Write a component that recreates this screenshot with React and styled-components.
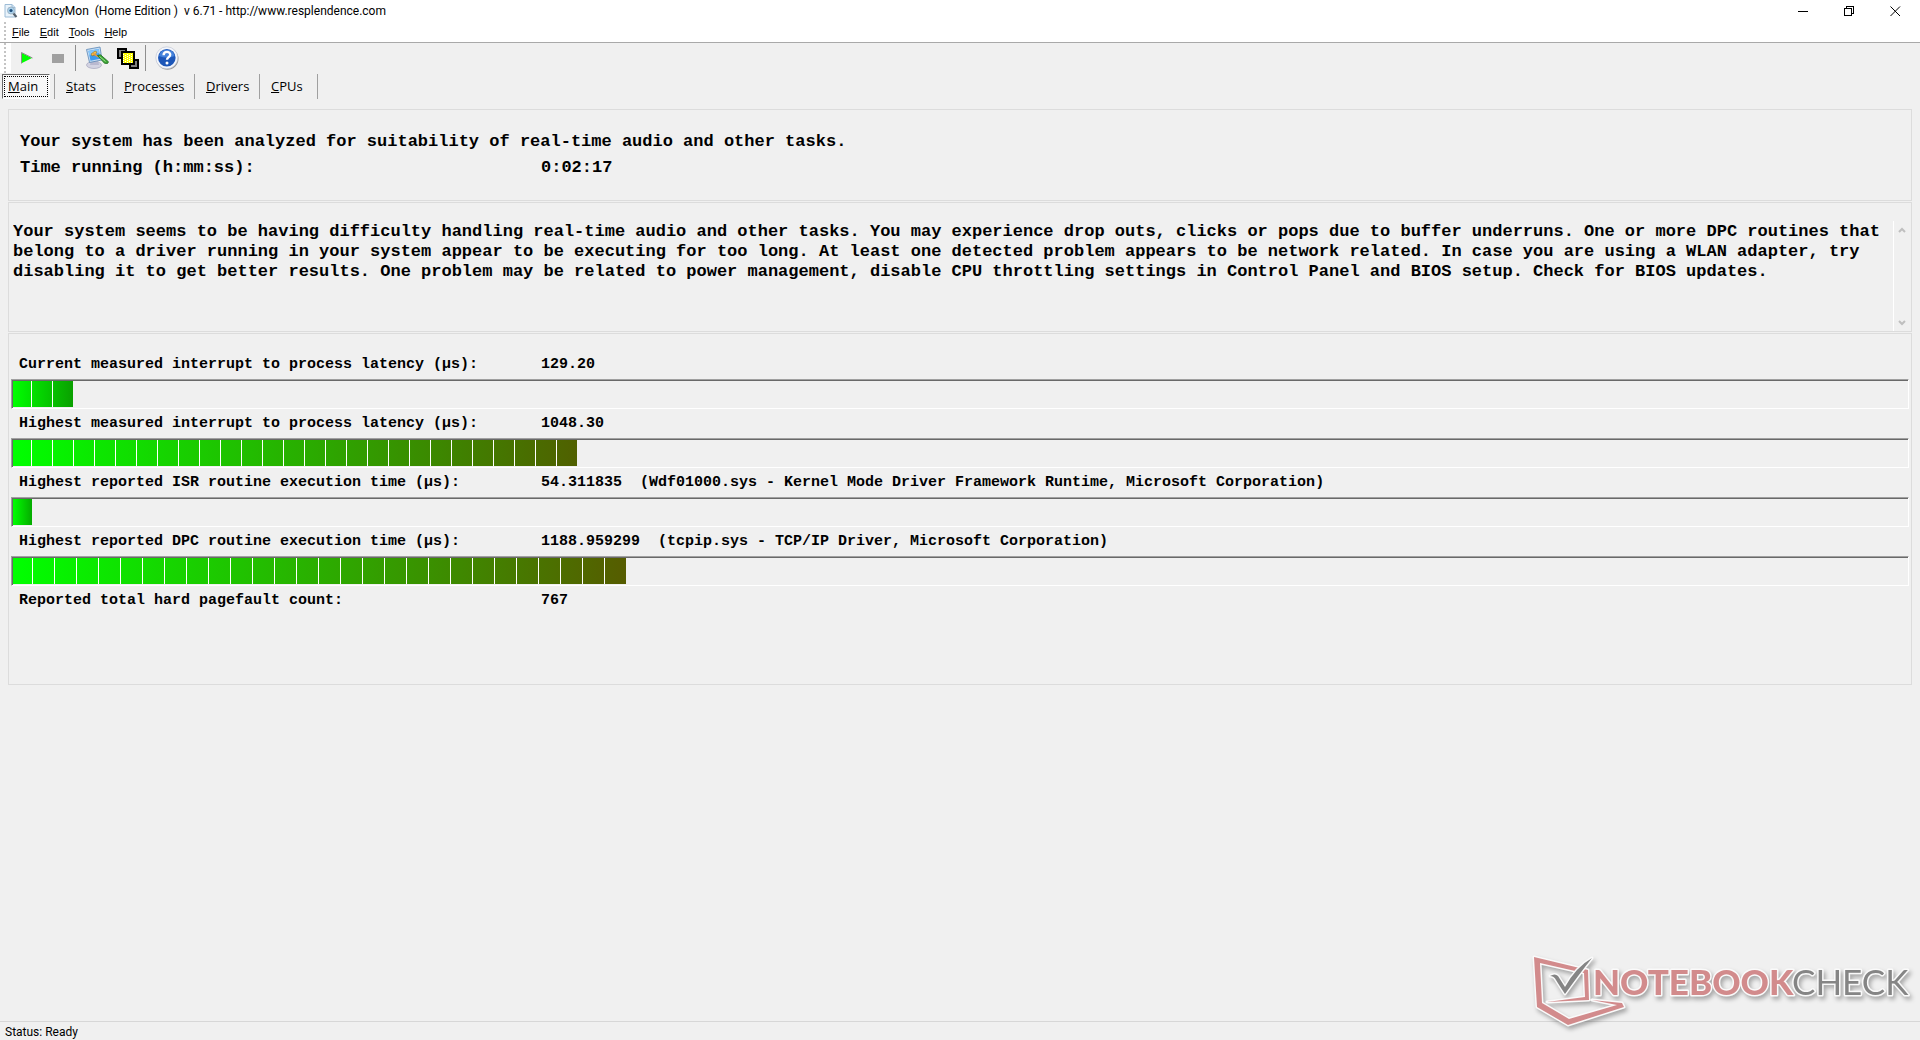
import React, { useState } from "react";
import styled, { createGlobalStyle, css } from "styled-components";

const UI_FONT = `Roboto, "Noto Sans", sans-serif`;
const TAB_FONT = `"Open Sans", "Noto Sans", sans-serif`;
const MENU_FONT = `"Liberation Sans", Arial, sans-serif`;
const MONO_FONT = `"Liberation Mono", "Courier New", monospace`;

const menus = ["File", "Edit", "Tools", "Help"];

const tabs = [
    { name: "Stats", width: 58 },
    { name: "Processes", width: 82 },
    { name: "Drivers", width: 65 },
    { name: "CPUs", width: 59 },
];

const report =
    "Your system seems to be having difficulty handling real-time audio and other tasks. You may experience drop outs, clicks or pops due to buffer underruns. One or more DPC routines that belong to a driver running in your system appear to be executing for too long. At least one detected problem appears to be network related. In case you are using a WLAN adapter, try disabling it to get better results. One problem may be related to power management, disable CPU throttling settings in Control Panel and BIOS setup. Check for BIOS updates.";

const measurements = [
    {
        label: "Current measured interrupt to process latency (µs):",
        value: "129.20",
        blocks: 3,
        pitch: 21,
        end: "#0aa000",
    },
    {
        label: "Highest measured interrupt to process latency (µs):",
        value: "1048.30",
        blocks: 27,
        pitch: 21,
        end: "#506000",
    },
    {
        label: "Highest reported ISR routine execution time (µs):",
        value: "54.311835",
        note: "(Wdf01000.sys - Kernel Mode Driver Framework Runtime, Microsoft Corporation)",
        blocks: 1,
        pitch: 22,
        end: "#05ab00",
    },
    {
        label: "Highest reported DPC routine execution time (µs):",
        value: "1188.959299",
        note: "(tcpip.sys - TCP/IP Driver, Microsoft Corporation)",
        blocks: 28,
        pitch: 22,
        end: "#565c00",
    },
];

function Hotkey({ children })
{
    return (
        <>
            <u>{children[0]}</u>
            {children.slice(1)}
        </>
    );
}

function AppIcon()
{
    return (
        <svg width="14" height="16" viewBox="0 0 14 16">
            <path d="M1 1.5h7l3 3v9.5H1z" fill="#e9f3fb" stroke="#9dbcd6" />
            <path d="M8 1.5v3h3" fill="#c7dff2" stroke="#9dbcd6" />
            <path d="M9 10l3.5 4" stroke="#54606b" strokeWidth="2" />
            <circle cx="7" cy="7.500" r="3.500" fill="#a9d2ee" stroke="#9fb4c4" />
            <circle cx="7" cy="7.500" r="1.600" fill="#1f4f7c" />
        </svg>
    );
}

function DisplayIcon()
{
    return (
        <svg width="24" height="24" viewBox="0 0 24 24">
            <ellipse cx="9" cy="19" rx="7.500" ry="3.500" fill="#d3d3e2" stroke="#9a9ab5" strokeWidth=".6" />
            <path d="M6 14h7l1 5H5z" fill="#b9b9d0" />
            <path d="M1.500 3.500L15 1l2 13-12.500 2.500z" fill="#c4dcf3" stroke="#5b86b5" strokeWidth=".8" />
            <path d="M3.500 5l10.200-1.900 1.500 9.700-9.700 1.900z" fill="#3c9af0" />
            <path d="M3.500 5l10.200-1.900.6 4L4.300 9.500z" fill="#84c6fa" />
            <path d="M6 8l4-3 2 1-2 3-3 1z" fill="#f2c14a" stroke="#7c5a1c" strokeWidth=".5" />
            <path d="M8 7.500l6 3.500" stroke="#e89a3c" strokeWidth="1.500" />
            <path d="M12.500 9.500l3-.7 8 7-1 1.700-3-.2z" fill="#3da635" stroke="#1d6b1d" strokeWidth=".8" />
            <path d="M14.500 10.500l6 5" stroke="#9be28c" strokeWidth="1" />
        </svg>
    );
}

function StackIcon()
{
    return (
        <svg width="24" height="24" viewBox="0 0 24 24" shapeRendering="crispEdges">
            <rect x="2" y="3" width="8" height="9" fill="#808080" stroke="#000" strokeWidth="2" />
            <rect x="14" y="14" width="8" height="8" fill="#808080" stroke="#000" strokeWidth="2" />
            <rect x="6" y="6" width="12" height="12" fill="#ffff00" stroke="#000" strokeWidth="2" />
            {[8, 10, 12, 14, 16].map((x) => (
                <path key={x} d={`M${x - 0.5} 8v9`} stroke="#fff" strokeDasharray="1 1" strokeDashoffset={(x / 2) % 2} />
            ))}
        </svg>
    );
}

function HelpIcon()
{
    return (
        <svg width="24" height="24" viewBox="0 0 24 24">
            <circle cx="12.500" cy="12.700" r="11" fill="#9a9a9a" />
            <circle cx="11.800" cy="11.800" r="11" fill="#f4f6fb" stroke="#b8bfd0" strokeWidth=".6" />
            <circle cx="11.800" cy="11.800" r="8.800" fill="#1c56b8" />
            <path d="M4 10a8 8 0 0 1 15.600 0q-7.800 3-15.600 0z" fill="#4583dc" />
            <path d="M8.600 9.200c0-4.400 6.800-4.200 6.600-.4-.1 2.300-3.200 2.500-3.200 5" fill="none" stroke="#fff" strokeWidth="2.400" />
            <circle cx="12" cy="17" r="1.500" fill="#fff" />
        </svg>
    );
}

function Watermark()
{
    return (
        <Brand viewBox="0 0 388 76" role="img" aria-label="Notebookcheck">
            <g stroke="#fafafa" strokeWidth="3" strokeLinejoin="round" paintOrder="stroke">
                <path
                    fill="#d28b8c"
                    d="M4 3L58 16 59 46 17 48 55 43 54 19 10 9 12 49 39 65 87 51 62 46 92 49 94 53 38 71 7 53z"
                />
                <path fill="#858585" d="M20 22q5-3 8 0l7 11Q46 13 62 4 50 19 35 40 29 31 26 26 24 22 20 22z" />
                <BrandText x="63" y="41" $weight="900" fill="#d28b8c">NOTEBOOK</BrandText>
                <BrandText x="262" y="41" $weight="400" fill="#858585">CHECK</BrandText>
            </g>
        </Brand>
    );
}

function Meter({ label, blocks, pitch, end })
{
    return (
        <MeterFrame role="meter" aria-label={label} aria-valuenow={blocks} aria-valuemin={0} aria-valuemax={90}>
            <MeterFill $pitch={pitch} $end={end} style={{ width: blocks * pitch - 3 }} />
        </MeterFrame>
    );
}

function App()
{
    const [tab, setTab] = useState("Main");

    return (
        <Window>
            <GlobalStyle />
            <TitleBar>
                <AppIcon />
                <Title>{"LatencyMon  (Home Edition )  v 6.71 - http://www.resplendence.com"}</Title>
                <WindowButton aria-label="Minimize">
                    <svg width="11" height="11" shapeRendering="crispEdges">
                        <path d="M0 5.500h10" stroke="#000" />
                    </svg>
                </WindowButton>
                <WindowButton aria-label="Restore">
                    <svg width="11" height="11" fill="none" stroke="#000" shapeRendering="crispEdges">
                        <path d="M.5 2.500h7v7h-7zM2.500 2.500v-2h7v7h-2" />
                    </svg>
                </WindowButton>
                <WindowButton aria-label="Close">
                    <svg width="11" height="11" stroke="#000">
                        <path d="M.5 .5l9.500 9.500M10 .5L.5 10" />
                    </svg>
                </WindowButton>
            </TitleBar>

            <MenuBar>
                <Grip />
                {menus.map((name) => (
                    <MenuItem key={name}><Hotkey>{name}</Hotkey></MenuItem>
                ))}
            </MenuBar>

            <ToolBar>
                <Grip />
                <ToolButton aria-label="Start">
                    <svg width="12" height="12">
                        <path d="M1 1v10l10-5z" fill="#00ff00" />
                        <path d="M.5 11.500V.5L11.500 6" fill="none" stroke="#8c8c8c" />
                    </svg>
                </ToolButton>
                <ToolButton aria-label="Stop">
                    <svg width="12" height="9">
                        <rect width="12" height="9" fill="#a0a0a0" />
                    </svg>
                </ToolButton>
                <ToolDivider />
                <ToolButton aria-label="Options"><DisplayIcon /></ToolButton>
                <ToolButton aria-label="Windows"><StackIcon /></ToolButton>
                <ToolDivider />
                <ToolButton aria-label="Help"><HelpIcon /></ToolButton>
            </ToolBar>

            <TabBar role="tablist">
                <MainTab role="tab" aria-selected={tab === "Main"} onClick={() => setTab("Main")}>
                    <Hotkey>Main</Hotkey>
                </MainTab>
                {tabs.map(({ name, width }) => (
                    <Tab key={name} role="tab" $width={width} aria-selected={tab === name} onClick={() => setTab(name)}>
                        <Hotkey>{name}</Hotkey>
                    </Tab>
                ))}
            </TabBar>

            <Content>
                <Summary>
                    <SummaryLine>Your system has been analyzed for suitability of real-time audio and other tasks.</SummaryLine>
                    <SummaryLine>
                        <SummaryLabel>Time running (h:mm:ss):</SummaryLabel>
                        <span>0:02:17</span>
                    </SummaryLine>
                </Summary>

                <Report>
                    <ReportText readOnly aria-label="Analysis report" value={report} />
                    <ScrollTrack>
                        <ScrollButton aria-label="Scroll up">
                            <svg width="8" height="6"><path d="M1 5l3-3 3 3" /></svg>
                        </ScrollButton>
                        <ScrollButton aria-label="Scroll down">
                            <svg width="8" height="6"><path d="M1 1l3 3 3-3" /></svg>
                        </ScrollButton>
                    </ScrollTrack>
                </Report>

                <Measurements>
                    {measurements.map((item) => (
                        <React.Fragment key={item.label}>
                            <Reading>
                                <ReadingLabel>{item.label}</ReadingLabel>
                                <span>{item.note ? `${item.value}  ${item.note}` : item.value}</span>
                            </Reading>
                            <Meter {...item} />
                        </React.Fragment>
                    ))}
                    <Reading>
                        <ReadingLabel>Reported total hard pagefault count:</ReadingLabel>
                        <span>767</span>
                    </Reading>
                </Measurements>
            </Content>

            <StatusBar>Status: Ready</StatusBar>
            <Watermark />
        </Window>
    );
}

const GlobalStyle = createGlobalStyle`
  * {
    box-sizing: border-box;
  }
  body {
    margin: 0;
    background: #f0f0f0;
    color: #000;
  }
  button {
    border: none;
    padding: 0;
    background: none;
    color: inherit;
    font: inherit;
  }
  svg {
    flex: none;
  }
`;

const Window = styled.div`
  position: relative;
  display: flex;
  flex-direction: column;
  min-height: 100vh;
  font-family: ${UI_FONT};
  font-size: 12px;
`;

const TitleBar = styled.header`
  display: flex;
  align-items: center;
  height: 22px;
  padding: 0 2px 0 4px;
  background: #fff;
`;

const Title = styled.h1`
  flex: 1;
  margin: 0 0 0 5px;
  font-size: 12px;
  font-weight: 400;
  line-height: 22px;
  white-space: pre;
`;

const WindowButton = styled.button`
  display: flex;
  align-items: center;
  justify-content: center;
  width: 46px;
  height: 20px;
`;

const Grip = styled.div`
  width: 2px;
  align-self: stretch;
  margin: 0 5px 0 4px;
  background: repeating-linear-gradient(to bottom, #c4c4c4 0, #c4c4c4 2px, transparent 2px, transparent 4px);
`;

const MenuBar = styled.nav`
  display: flex;
  align-items: center;
  height: 21px;
  border-bottom: 1px solid #a9a9a9;
  background: #fff;
  font-family: ${MENU_FONT};
`;

const MenuItem = styled.button`
  padding: 0 5px;
  font-size: 11px;
  line-height: 20px;

  &:first-of-type {
    padding-left: 1px;
  }
`;

const ToolBar = styled.div`
  display: flex;
  align-items: center;
  height: 30px;
  background: linear-gradient(to right, #fff 11px, transparent 11px);
`;

const ToolButton = styled.button`
  display: flex;
  align-items: center;
  justify-content: center;
  width: 31px;
  height: 30px;
`;

const ToolDivider = styled.span`
  width: 1px;
  height: 26px;
  margin: 0 5px 0 2px;
  background: #8e8e8e;
`;

const TabBar = styled.div`
  display: flex;
  align-items: center;
  height: 25px;
  margin-top: 1px;
  padding-left: 2px;
  font-family: ${TAB_FONT};
  font-size: 13px;
  line-height: 22px;
`;

const MainTab = styled.button`
  width: 48px;
  height: 25px;
  margin-right: 4px;
  padding: 0 0 1px 5px;
  border: 1px solid;
  border-color: #696969 #fff #fff #696969;
  background: #f8f8f8;
  text-align: left;
  outline: 1px dotted #000;
  outline-offset: -3px;
`;

const Tab = styled.button`
  width: ${({ $width }) => $width}px;
  height: 25px;
  padding: 0 0 2px 11px;
  border-left: 1px solid #a0a0a0;
  text-align: left;

  &:last-child {
    border-right: 1px solid #a0a0a0;
  }
`;

const Content = styled.main`
  display: flex;
  flex: 1;
  flex-direction: column;
  gap: 1px;
  padding: 10px 8px;
  font-family: ${MONO_FONT};
  font-weight: 700;
`;

const panel = css`
  border: 1px solid #dcdcdc;
`;

const Summary = styled.section`
  ${panel}
  padding: 19px 11px 19px;
  font-size: 17px;
`;

const SummaryLine = styled.p`
  display: flex;
  margin: 0;
  line-height: 26px;
`;

const SummaryLabel = styled.span`
  width: 521px;
`;

const Report = styled.section`
  ${panel}
  display: flex;
  padding: 18px 1px 0 4px;
`;

const ReportText = styled.textarea`
  flex: 1;
  height: 110px;
  padding: 1px 0 0;
  border: none;
  outline: none;
  overflow: hidden;
  resize: none;
  background: transparent;
  color: #000;
  font: inherit;
  font-size: 17px;
  line-height: 20px;
`;

const ScrollTrack = styled.div`
  display: flex;
  flex-direction: column;
  justify-content: space-between;
  width: 17px;
  border-left: 1px solid #fff;
`;

const ScrollButton = styled.button`
  display: flex;
  align-items: center;
  justify-content: center;
  height: 17px;

  path {
    fill: none;
    stroke: #bfbfbf;
    stroke-width: 2;
  }
`;

const Measurements = styled.section`
  ${panel}
  padding: 16px 2px 69px;
`;

const Reading = styled.div`
  display: flex;
  height: 29px;
  padding-left: 8px;
  font-size: 15px;
  line-height: 29px;
  white-space: pre;
`;

const ReadingLabel = styled.span`
  width: 522px;
`;

const MeterFrame = styled.div`
  height: 30px;
  border: 1px solid;
  border-color: #a0a0a0 #fff #fff #a0a0a0;
  box-shadow: inset 1px 1px #696969;
  padding: 1px 0 1px 1px;
`;

const MeterFill = styled.div`
  max-width: 100%;
  height: 100%;
  background:
    repeating-linear-gradient(
      to right,
      transparent 0,
      transparent ${({ $pitch }) => $pitch - 1}px,
      #fff ${({ $pitch }) => $pitch - 1}px,
      #fff ${({ $pitch }) => $pitch}px
    ) -2px 0 / calc(100% + 2px) 100% no-repeat,
    linear-gradient(to right, #00ff00, ${({ $end }) => $end});
`;

const StatusBar = styled.footer`
  height: 19px;
  padding-left: 5px;
  border-top: 1px solid #d7d7d7;
  line-height: 20px;
`;

const Brand = styled.svg`
  position: absolute;
  right: 2px;
  bottom: 10px;
  width: 388px;
  height: 76px;
  filter: drop-shadow(2px 3px 2px rgba(0, 0, 0, 0.3));
`;

const BrandText = styled.text`
  font-family: Lato, sans-serif;
  font-size: 35px;
  font-weight: ${({ $weight }) => $weight};
`;

export default App;
